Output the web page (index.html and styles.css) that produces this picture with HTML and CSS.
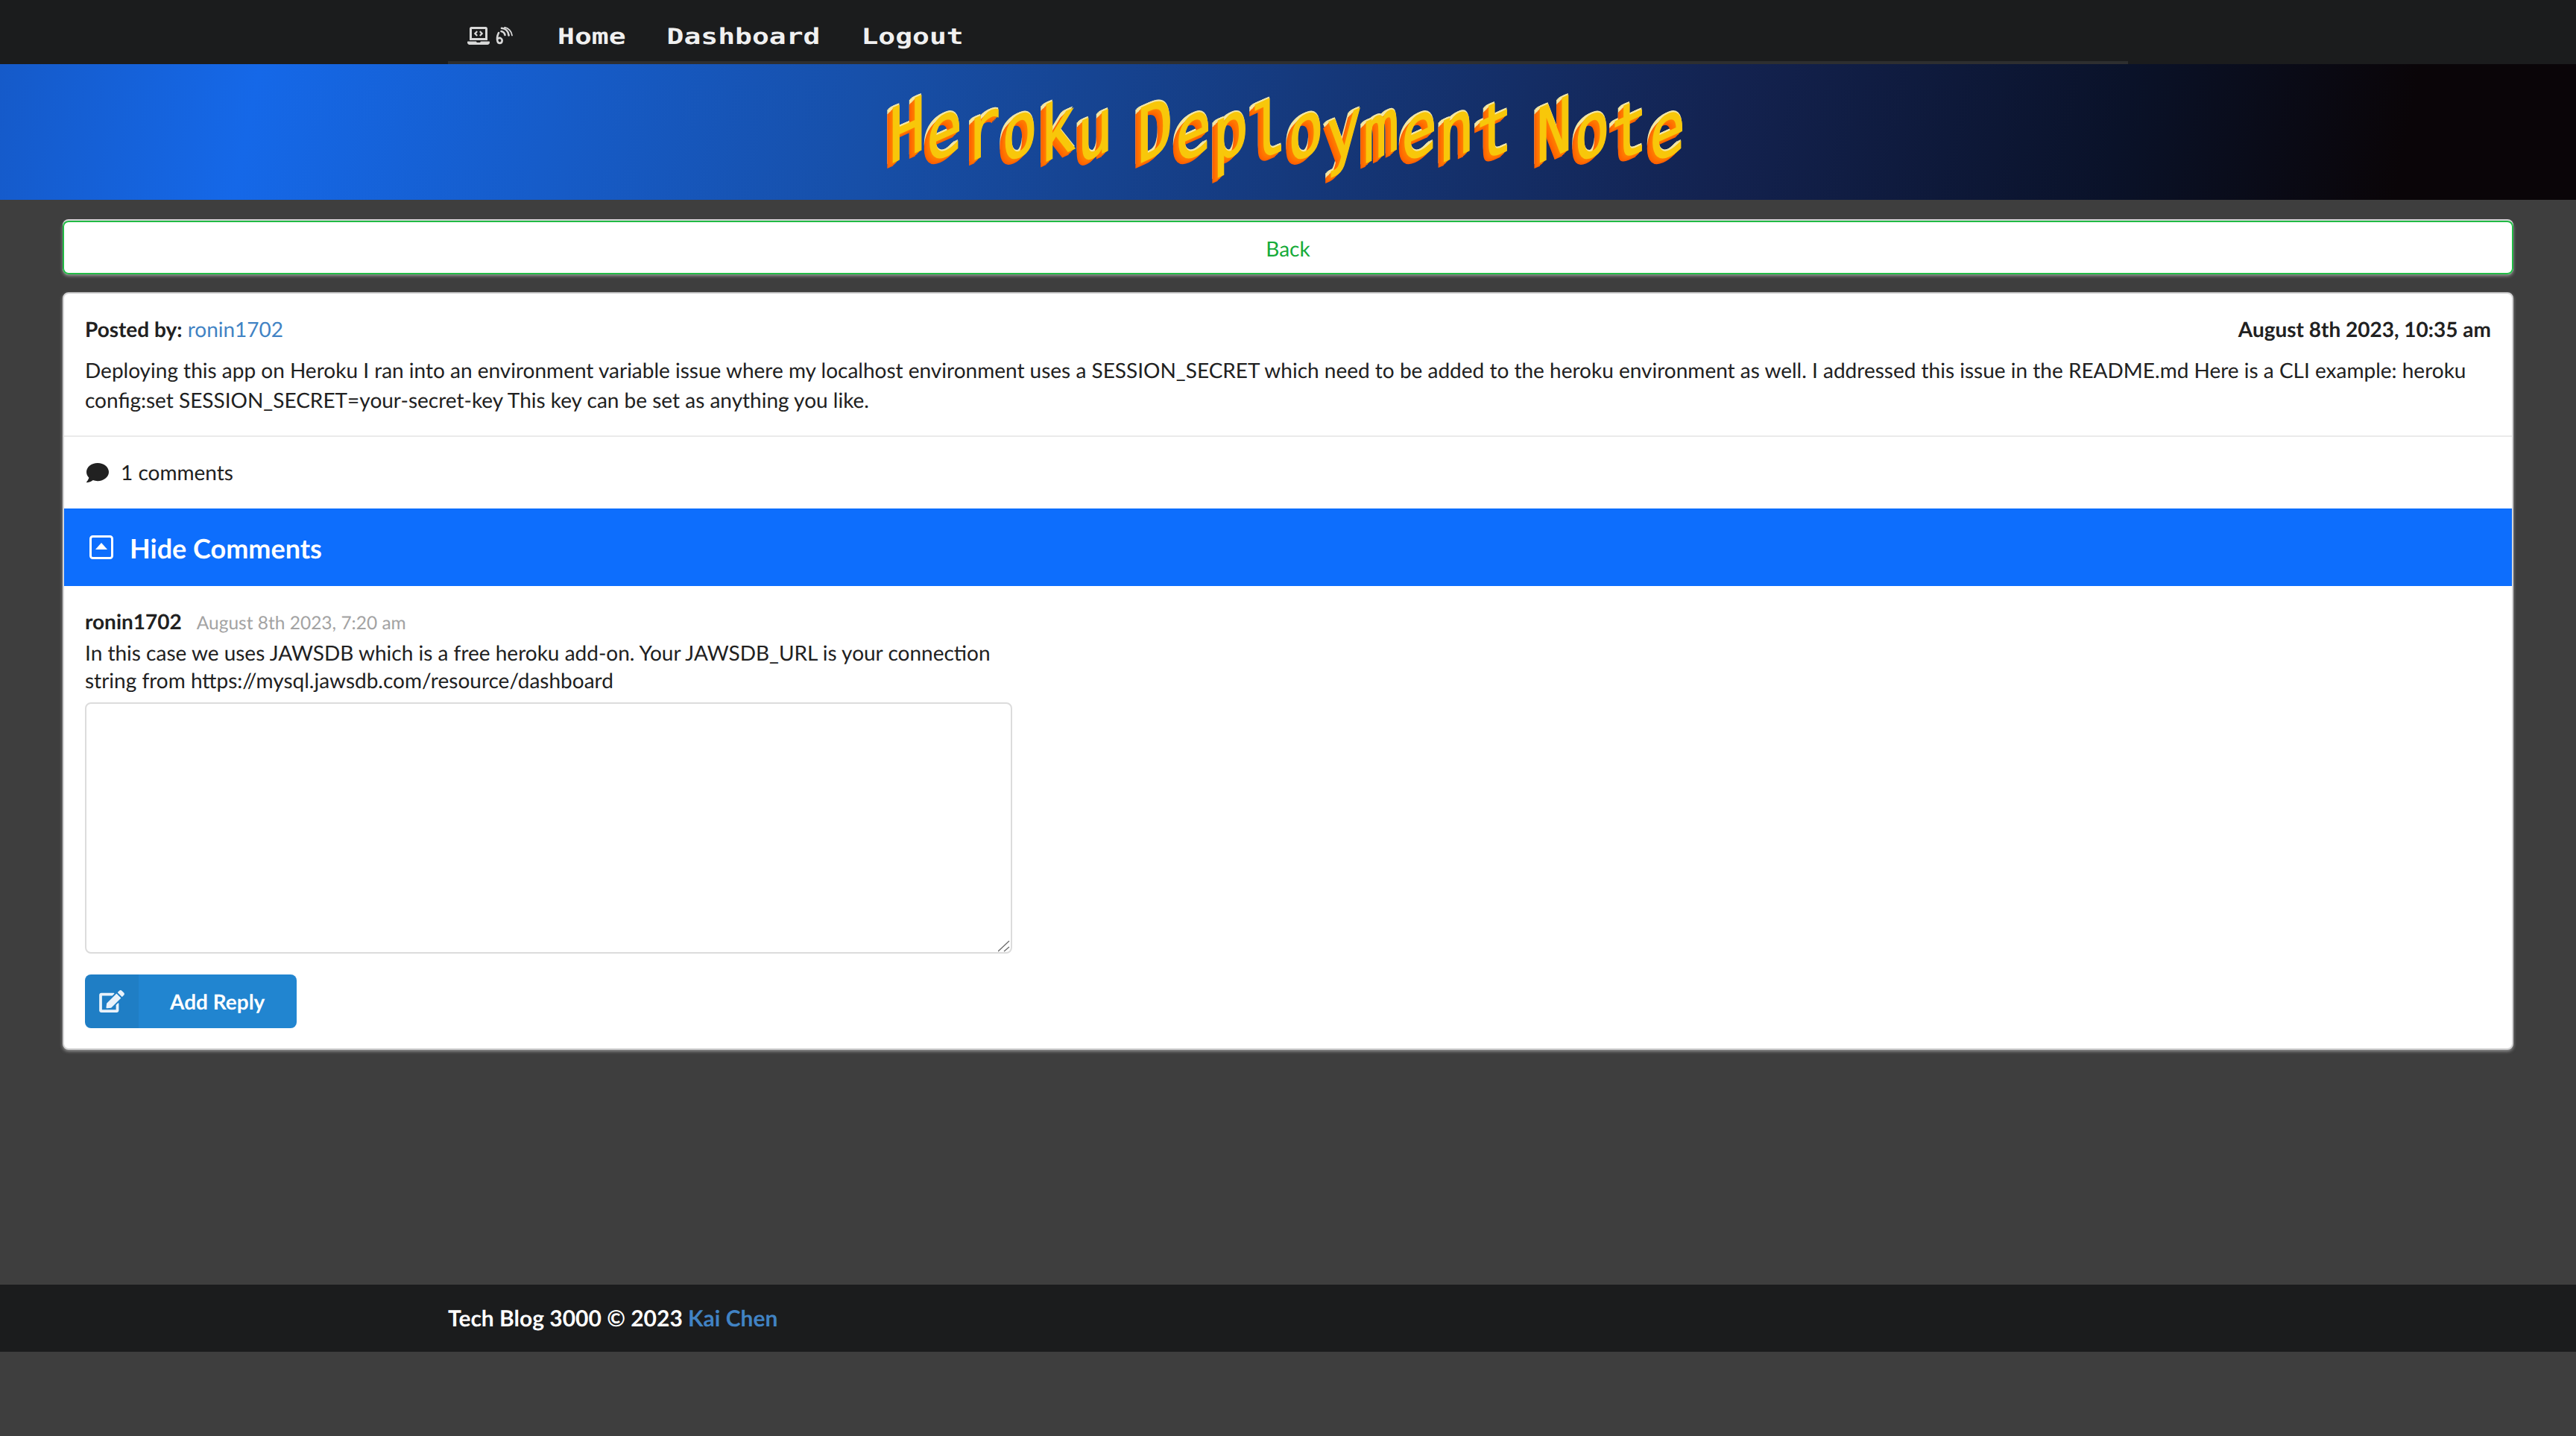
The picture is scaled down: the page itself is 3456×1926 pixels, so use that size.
FILE: index.html
```html
<!DOCTYPE html>
<html lang="en">
<head>
    <meta charset="UTF-8">
    <meta name="viewport" content="width=device-width, initial-scale=1.0">
    <title>Heroku Deployment Note</title>
    <link rel="stylesheet" href="styles.css">
</head>
<body>
    <nav class="topbar">
        <div class="topbar-inner">
            <a class="logo" href="#">
                <svg class="logo-laptop" viewBox="0 0 640 512"><path d="M255.03 261.65c6.25 6.25 16.38 6.25 22.63 0l11.31-11.31c6.25-6.25 6.25-16.38 0-22.63L253.25 192l35.71-35.72c6.25-6.25 6.25-16.38 0-22.63l-11.31-11.31c-6.25-6.25-16.38-6.25-22.63 0l-58.34 58.34c-6.25 6.25-6.25 16.38 0 22.63l58.35 58.34zm96.01-11.3l11.31 11.31c6.25 6.25 16.38 6.25 22.63 0l58.34-58.34c6.25-6.25 6.25-16.38 0-22.63l-58.34-58.34c-6.25-6.25-16.38-6.25-22.63 0l-11.31 11.31c-6.25 6.25-6.25 16.38 0 22.63L386.75 192l-35.71 35.72c-6.25 6.25-6.25 16.38 0 22.63zM624 416H381.54c-.74 19.81-14.71 32-32.74 32H288c-18.69 0-33.02-17.47-32.77-32H16c-8.8 0-16 7.2-16 16v16c0 35.2 28.8 64 64 64h512c35.2 0 64-28.8 64-64v-16c0-8.8-7.2-16-16-16zM576 48c0-26.4-21.6-48-48-48H112C85.6 0 64 21.6 64 48v336h512V48zm-64 272H128V64h384v256z"/></svg>
                <svg class="logo-ear" viewBox="0 0 24 24" fill="none" stroke-width="2.6" stroke-linecap="round"><path d="M5 8C3 12 2.500 16 3.500 19.500C4.500 22.500 8.500 22.800 9.500 19.500C10.300 16.500 7 13.500 4.500 15.500"/><path d="M8.500 6C11 6.500 13 8.500 13.500 11"/><path d="M9 1.800C14 2.300 18 6 18.600 11.500"/><path d="M13 0.800C18 1.500 22.500 6 23 11.500" stroke-width="1.800"/></svg>
            </a>
            <a class="nav-link" href="#">Home</a>
            <a class="nav-link" href="#">Dashboard</a>
            <a class="nav-link" href="#">Logout</a>
        </div>
    </nav>

    <header class="banner">
        <h1 class="banner-title">
            <span class="word"><span class="ch">H</span><span class="ch">e</span><span class="ch">r</span><span class="ch">o</span><span class="ch">k</span><span class="ch">u</span></span>
            <span class="word"><span class="ch">D</span><span class="ch">e</span><span class="ch">p</span><span class="ch">l</span><span class="ch">o</span><span class="ch">y</span><span class="ch">m</span><span class="ch">e</span><span class="ch">n</span><span class="ch">t</span></span>
            <span class="word"><span class="ch">N</span><span class="ch">o</span><span class="ch">t</span><span class="ch">e</span></span>
        </h1>
    </header>

    <main class="content">
        <a class="back-btn" href="#">Back</a>

        <section class="card">
            <div class="post">
                <div class="post-meta">
                    <span><b>Posted by:</b> <a href="#">ronin1702</a></span>
                    <b>August 8th 2023, 10:35 am</b>
                </div>
                <p class="post-body">Deploying this app on Heroku I ran into an environment variable issue where my localhost environment uses a SESSION_SECRET which need to be added to the heroku environment as well. I addressed this issue in the README.md Here is a CLI example: heroku config:set SESSION_SECRET=your-secret-key This key can be set as anything you like.</p>
            </div>

            <div class="comment-count">
                <svg class="icon-comment" viewBox="0 0 512 512"><path d="M256 32C114.6 32 0 125.1 0 240c0 49.6 21.4 95 57 130.7C44.5 421.1 2.7 466 2.2 466.5c-2.2 2.3-2.800 5.700-1.500 8.700S4.800 480 8 480c66.300 0 116-31.800 140.600-51.400 32.700 12.300 69 19.400 107.400 19.400 141.400 0 256-93.100 256-208S397.400 32 256 32z"/></svg>
                <span>1 comments</span>
            </div>

            <div class="toggle-bar">
                <svg class="icon-toggle" viewBox="0 0 32 32"><rect x="1.500" y="1.500" width="29" height="29" rx="3" fill="none" stroke="#fff" stroke-width="3"/><path d="M16 10L24 19H8Z" fill="#fff"/></svg>
                <span>Hide Comments</span>
            </div>

            <div class="comments">
                <div class="comment-head"><b>ronin1702</b><span class="comment-date">August 8th 2023, 7:20 am</span></div>
                <p class="comment-text">In this case we uses JAWSDB which is a free heroku add-on. Your JAWSDB_URL is your connection string from https://mysql.jawsdb.com/resource/dashboard</p>
                <div class="reply-wrap">
                    <textarea class="reply-box"></textarea>
                    <svg class="reply-grip" viewBox="0 0 16 16" fill="none" stroke="#6b6b6b" stroke-width="1.300"><path d="M0 15L15 1M8 15L15 9"/></svg>
                </div>
                <button type="button" class="reply-btn">
                    <span class="reply-icon"><svg viewBox="0 0 576 512"><path d="M402.600 83.200l90.200 90.200c3.800 3.800 3.800 10 0 13.800L274.400 405.600l-92.800 10.300c-12.400 1.400-22.900-9.100-21.500-21.500l10.300-92.800L388.800 83.200c3.800-3.800 10-3.800 13.800 0zm162-22.900l-48.800-48.800c-15.200-15.200-39.900-15.200-55.200 0l-35.400 35.400c-3.800 3.800-3.800 10 0 13.800l90.200 90.200c3.800 3.800 10 3.800 13.800 0l35.400-35.400c15.200-15.300 15.200-40 0-55.200zM384 346.200V448H64V128h229.800c3.200 0 6.200-1.300 8.500-3.500l40-40c7.600-7.600 2.200-20.500-8.500-20.500H48C21.500 64 0 85.500 0 112v352c0 26.500 21.500 48 48 48h352c26.500 0 48-21.500 48-48V306.200c0-10.700-12.900-16-20.500-8.500l-40 40c-2.200 2.300-3.500 5.300-3.500 8.500z"/></svg></span>
                    <span class="reply-label">Add Reply</span>
                </button>
            </div>
        </section>
    </main>

    <footer class="footer">
        <div class="footer-inner"><b>Tech Blog 3000 © 2023 <a href="#">Kai Chen</a></b></div>
    </footer>
</body>
</html>
```

FILE: styles.css
```css
* {
    box-sizing: border-box;
}

body {
    margin: 0;
    background-color: #3e3e3e;
    color: #212121;
    font-family: Lato, "Open Sans", sans-serif;
    font-size: 28px;
    line-height: 40px;
    text-rendering: geometricPrecision;
}

a {
    color: #4183c4;
    text-decoration: none;
}

p {
    margin: 0;
}

/* top menu */
.topbar {
    height: 86px;
    background-color: #1b1c1d;
}

.topbar-inner {
    display: flex;
    align-items: center;
    width: 2254px;
    height: 86px;
    margin: 0 auto;
    padding: 16px 0 0 26px;
    border-bottom: 4px solid #2e2f30;
}

.logo {
    display: flex;
    align-items: center;
    gap: 7px;
    width: 121px;
    margin-top: -2px;
}

.logo-laptop {
    width: 30px;
    height: 24px;
    fill: #d8d8d8;
}

.logo-ear {
    width: 24px;
    height: 24px;
    stroke: #d8d8d8;
}

.nav-link {
    margin-right: 55px;
    color: #f0f0f0;
    font-family: "DejaVu Sans Mono", monospace;
    font-size: 38px;
    font-weight: 700;
    line-height: 40px;
    transform: scaleY(0.78);
}

/* banner */
.banner {
    display: flex;
    align-items: center;
    justify-content: center;
    height: 182px;
    background: linear-gradient(101deg, #155ac9 0%, #1568e8 10%, #174fa8 34%, #13224f 67%, #0a1229 82%, #0a0508 93%);
}

.banner-title {
    margin: 0;
    padding: 18px 0 0;
    color: #f8c70a;
    font-family: "DejaVu Sans Mono", monospace;
    font-size: 100px;
    font-weight: 400;
    line-height: 140px;
    word-spacing: -30px;
    white-space: nowrap;
}

.word {
    display: inline-block;
}

.ch {
    display: inline-block;
    width: 50.500px;
    transform: skewY(-24deg) scaleX(0.8);
    transform-origin: left center;
    -webkit-text-stroke: 1.500px #f8c70a;
    text-shadow:
        -2px 1px 0 #ff8000, -4px 2px 0 #ff7800, -6px 3px 0 #ff7000, -8px 4px 0 #ff6800, -10px 5px 0 #ff6000,
        0 -3px 0 #f3e6a4, -2px -3px 0 #f3e6a4, -4px -3px 0 #f3e6a4, -6px -3px 0 #f3e6a4, -8px -2px 0 #f3e6a4, -10px -1px 0 #f3e6a4;
}

/* page */
.content {
    display: flex;
    flex-direction: column;
    gap: 24px;
    min-height: 1455px;
    padding: 28px 84px 0;
}

.back-btn {
    display: flex;
    align-items: center;
    justify-content: center;
    height: 72px;
    padding-top: 2px;
    border-radius: 8px;
    background-color: #fff;
    color: #16ab39;
    box-shadow: inset 0 0 0 2px #21ba45, 0 -2px 0 #d4d4d5, 0 2px 4px rgba(210, 210, 210, 0.6);
}

.card {
    height: 1016px;
    border: 2px solid #d4d4d5;
    border-radius: 8px;
    background-color: #fff;
    box-shadow: 0 2px 4px rgba(210, 210, 210, 0.6);
}

.post {
    padding: 27px 28px 28px;
    border-bottom: 2px solid #eaeaea;
}

.post-meta {
    display: flex;
    justify-content: space-between;
    margin-bottom: 15px;
}

.comment-count {
    display: flex;
    align-items: center;
    gap: 16px;
    height: 96px;
    padding: 0 0 2px 30px;
}

.icon-comment {
    width: 30px;
    height: 30px;
    margin-top: 2px;
    fill: #212121;
}

.toggle-bar {
    display: flex;
    align-items: center;
    gap: 22px;
    height: 104px;
    padding-left: 34px;
    background-color: #0d6efd;
    color: #fff;
    font-size: 36px;
    font-weight: 700;
}

.toggle-bar span {
    padding-top: 2px;
}

.icon-toggle {
    width: 32px;
    height: 32px;
}

.comments {
    padding: 27px 28px;
}

.comment-head {
    display: flex;
    align-items: baseline;
    gap: 20px;
    height: 40px;
}

.comment-date {
    color: #a3a3a3;
    font-size: 24.500px;
}

.comment-text {
    width: 1244px;
    margin-top: 4px;
    line-height: 37px;
}

.reply-wrap {
    position: relative;
    width: 1244px;
    height: 337px;
    margin: 11px 0 28px;
}

.reply-box {
    display: block;
    width: 100%;
    height: 100%;
    border: 2px solid #dcdcdc;
    border-radius: 8px;
    background-color: #fff;
    resize: none;
}

.reply-grip {
    position: absolute;
    right: 3px;
    bottom: 2px;
    width: 16px;
    height: 16px;
}

.reply-btn {
    display: flex;
    align-items: stretch;
    width: 284px;
    height: 72px;
    padding: 0;
    border: none;
    border-radius: 8px;
    overflow: hidden;
    background-color: #2185d0;
    color: #fff;
    font-family: inherit;
    font-size: 28px;
    font-weight: 700;
    text-rendering: geometricPrecision;
}

.reply-icon {
    display: flex;
    align-items: center;
    justify-content: center;
    width: 72px;
    background-color: rgba(0, 0, 0, 0.05);
}

.reply-icon svg {
    width: 34px;
    height: 30px;
    fill: rgba(255, 255, 255, 0.9);
}

.reply-label {
    align-self: center;
    padding-left: 42px;
}

/* footer */
.footer {
    height: 90px;
    background-color: #1b1c1d;
    color: #fff;
    font-size: 30px;
}

.footer-inner {
    display: flex;
    align-items: center;
    width: 2254px;
    height: 90px;
    margin: 0 auto;
}
```
